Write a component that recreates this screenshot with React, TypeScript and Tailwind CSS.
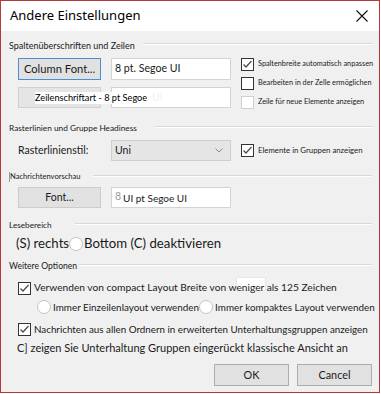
import React from 'react';

const font = { fontFamily: 'Lato, "Liberation Sans", sans-serif' };

function GroupHeader({ label, labelWidth, size }: { label: string; labelWidth: string; size: string }) {
  return (
    <div className="flex items-center h-[14px] pl-[8px] pr-[7px]">
      <span className={`${labelWidth} ${size} shrink-0 text-[#1a1a1a] whitespace-nowrap leading-none`}>{label}</span>
      <div className="flex-1 -mt-[3px] border-t border-[#d8d8d8] border-b border-b-white" />
    </div>
  );
}

function CheckBox({ checked = false, disabled = false }: { checked?: boolean; disabled?: boolean }) {
  return (
    <div
      className={`w-[13px] h-[13px] shrink-0 bg-white border ${disabled ? 'border-[#d0d0d0]' : 'border-[#333333]'} flex items-center justify-center`}
    >
      {checked && (
        <svg width="11" height="11" viewBox="0 0 11 11">
          <polyline points="1.5,5.5 4,8 9.5,2" fill="none" stroke="#4d4d4d" strokeWidth="1.3" />
        </svg>
      )}
    </div>
  );
}

function Radio() {
  return <div className="w-[14px] h-[14px] shrink-0 rounded-full bg-white border border-[#c4c4c4]" />;
}

export default function App() {
  return (
    <div className="w-[381px] h-[394px] bg-white overflow-hidden" style={font}>
      <div className="w-[380px] h-[393px] border border-[#b8383c] bg-[#f0f0f0] flex flex-col">
        {/* Title bar */}
        <div className="h-[30px] bg-white flex items-center justify-between pl-[9px] pr-[11px] shrink-0">
          <span className="text-[13px] text-black" style={{ fontFamily: '"Noto Sans", sans-serif' }}>
            Andere Einstellungen
          </span>
          <svg width="12" height="12" viewBox="0 0 12 12">
            <path d="M0.5 0.5 L11.5 11.5 M11.5 0.5 L0.5 11.5" stroke="#111" strokeWidth="1.1" />
          </svg>
        </div>

        {/* Spaltenüberschriften und Zeilen */}
        <div className="mt-[7px]">
          <GroupHeader label="Spaltenüberschriften und Zeilen" labelWidth="w-[134px]" size="text-[9px]" />
        </div>
        <div className="flex mt-[6px] pl-[17px]">
          <div className="flex flex-col w-[213px] shrink-0">
            <div className="flex h-[22px] gap-[10px]">
              <div className="w-[83px] h-[22px] bg-[#e1e1e1] border border-[#4a8fd6] flex items-center justify-center text-[11.2px] text-[#1a1a1a] whitespace-nowrap">
                Column Font...
              </div>
              <div className="w-[120px] h-[22px] bg-white border border-[#d4d4d4] flex items-center pl-[3px] text-[10.6px] text-[#1a1a1a] whitespace-nowrap">
                8 pt. Segoe UI
              </div>
            </div>
            <div className="relative flex h-[21px] gap-[10px] mt-[7px]">
              <div className="w-[83px] h-[21px] bg-[#e5e5e5] border border-[#d0d0d0]" />
              <div className="w-[120px] h-[21px] bg-white border border-[#d4d4d4] flex items-center pl-[40px] text-[10.6px] text-[#f2f2f2] whitespace-nowrap">
                UI
              </div>
              <div className="absolute left-[17px] top-[5px] h-[12px] bg-white flex items-center pr-[1px] text-[9.2px] text-black leading-none whitespace-nowrap">
                Zeilenschriftart - 8 pt Segoe
              </div>
            </div>
          </div>
          <div className="flex flex-col ml-[10px] gap-[7px] text-[7.3px] text-[#1a1a1a] whitespace-nowrap">
            <div className="flex items-center gap-[4px] h-[13px]">
              <CheckBox checked />
              <span>Spaltenbreite automatisch anpassen</span>
            </div>
            <div className="flex items-center gap-[4px] h-[13px] -mt-[1px]">
              <CheckBox />
              <span>Bearbeiten in der Zelle ermöglichen</span>
            </div>
            <div className="flex items-center gap-[4px] h-[13px] -mt-[1px]">
              <CheckBox disabled />
              <span>Zeile für neue Elemente anzeigen</span>
            </div>
          </div>
        </div>

        {/* Rasterlinien */}
        <div className="mt-[12px]">
          <GroupHeader label="Rasterlinien und Gruppe Headiness" labelWidth="w-[147px]" size="text-[8.3px]" />
        </div>
        <div className="flex items-center mt-[5px] h-[21px] pl-[17px]">
          <span className="w-[93px] shrink-0 text-[10.5px] text-[#1a1a1a]">Rasterlinienstil:</span>
          <div className="w-[120px] shrink-0 h-[21px] bg-[#e5e5e5] border border-[#cfcfcf] flex items-center justify-between pl-[3px] pr-[7px] text-[10.5px] text-[#1a1a1a]">
            <span>Uni</span>
            <svg width="8" height="5" viewBox="0 0 8 5">
              <polyline points="0.5,0.5 4,4 7.5,0.5" fill="none" stroke="#8a8a8a" strokeWidth="1" />
            </svg>
          </div>
          <div className="flex items-center gap-[4px] ml-[10px] text-[7.8px] text-[#1a1a1a] whitespace-nowrap">
            <CheckBox checked />
            <span>Elemente in Gruppen anzeigen</span>
          </div>
        </div>

        {/* Nachrichtenvorschau */}
        <div className="mt-[9px] relative">
          <div className="absolute left-[8px] top-[2px] w-px h-[10px] bg-[#9a9a9a]" />
          <div className="pl-[1px]">
            <GroupHeader label="Nachrichtenvorschau" labelWidth="w-[83px]" size="text-[7.6px]" />
          </div>
        </div>
        <div className="flex mt-[3px] h-[21px] gap-[10px] pl-[17px]">
          <div className="w-[83px] h-[21px] bg-[#e1e1e1] border border-[#cccccc] flex items-center justify-center text-[10.5px] text-[#1a1a1a]">
            Font...
          </div>
          <div className="w-[120px] h-[21px] bg-white border border-[#d4d4d4] flex items-center pl-[3px] text-[10px] text-[#1a1a1a] gap-[2px] whitespace-nowrap">
            <span className="text-[#9a9a9a] -mt-[2px] text-[10.5px]">8</span>
            <span className="mt-[1px]">UI pt Segoe UI</span>
          </div>
        </div>

        {/* Lesebereich */}
        <div className="mt-[10px]">
          <GroupHeader label="Lesebereich" labelWidth="w-[66px]" size="text-[8.2px]" />
        </div>
        <div className="flex items-center mt-[2px] h-[20px] pl-[15px] text-[13.2px] text-[#1a1a1a] whitespace-nowrap">
          <span>(S) rechts</span>
          <Radio />
          <span className="ml-[1px]">Bottom (C) deaktivieren</span>
        </div>

        {/* Weitere Optionen */}
        <div className="mt-[5px]">
          <GroupHeader label="Weitere Optionen" labelWidth="w-[70px]" size="text-[8.6px]" />
        </div>
        <div className="relative flex items-center gap-[3px] mt-[6px] h-[18px] pl-[17px] text-[10.2px] text-[#1a1a1a] whitespace-nowrap">
          <div className="absolute left-[235px] -top-[2px] w-[30px] h-[14px] bg-white border border-[#e6e6e6]" />
          <CheckBox checked />
          <span className="relative">Verwenden von compact Layout Breite von weniger als 125 Zeichen</span>
        </div>
        <div className="flex items-center mt-[2px] h-[16px] pl-[36px] text-[9.9px] text-[#1a1a1a] whitespace-nowrap">
          <Radio />
          <span className="ml-[2px]">Immer Einzeilenlayout verwenden</span>
          <Radio />
          <span className="ml-[2px]">Immer kompaktes Layout verwenden</span>
        </div>
        <div className="flex items-center gap-[3px] mt-[5px] h-[18px] pl-[17px] text-[9.8px] text-[#1a1a1a] whitespace-nowrap">
          <CheckBox checked />
          <span>Nachrichten aus allen Ordnern in erweiterten Unterhaltungsgruppen anzeigen</span>
        </div>
        <div className="flex items-center mt-[2px] h-[16px] pl-[16px] text-[11px] text-[#1a1a1a] whitespace-nowrap">
          C] zeigen Sie Unterhaltung Gruppen eingerückt klassische Ansicht an
        </div>

        {/* Buttons */}
        <div className="flex justify-end gap-[8px] mt-[8px] pr-[7px]">
          <div className="w-[75px] h-[22px] bg-[#e1e1e1] border border-[#adadad] flex items-center justify-center text-[10.8px] text-[#1a1a1a]">
            OK
          </div>
          <div className="w-[75px] h-[22px] bg-[#e1e1e1] border border-[#adadad] flex items-center justify-center text-[10.8px] text-[#1a1a1a]">
            Cancel
          </div>
        </div>
      </div>
    </div>
  );
}
